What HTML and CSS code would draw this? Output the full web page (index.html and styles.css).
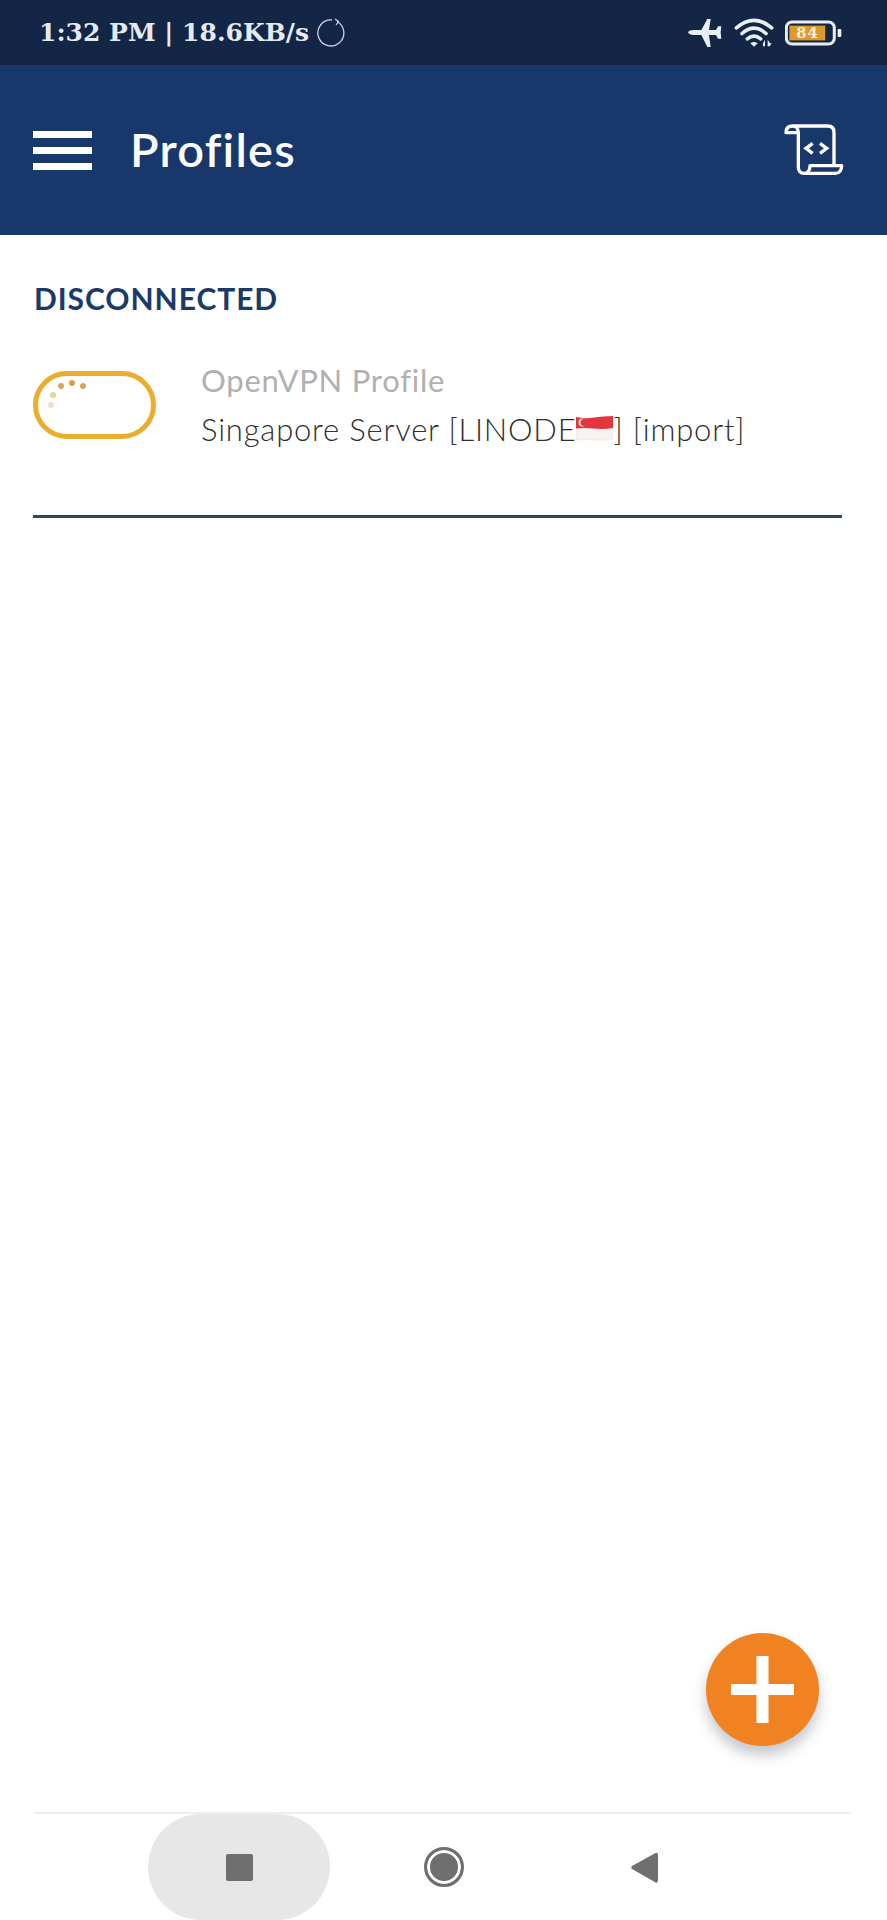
FILE: index.html
```html
<!DOCTYPE html>
<html lang="en">
<head>
<meta charset="utf-8">
<title>Profiles</title>
<link rel="stylesheet" href="styles.css">
</head>
<body>
<div class="app">
  <div class="statusbar">
    <div class="status-left">
      <span class="status-text">1:32 PM | 18.6KB/s</span>
      <svg class="spinner" viewBox="0 0 30 30"><path d="M20 3.500A13 13 0 1 1 15 2" /><path class="spinner-tip" d="M18 1l3.500 2.500-2.500 3.500"/></svg>
    </div>
    <div class="status-right">
      <svg class="ic-plane" viewBox="88 75 102 90"><path d="M88 118Q92 111 105 111L128 111 146 78H156L151 111 172 111 178 100H188L186 118 188 137H178L172 126H151L156 162H146L128 126H105Q92 126 88 118Z"/></svg>
      <svg class="ic-wifi" viewBox="225 75 120 95">
        <path class="wifi-arc" d="M232 107Q285 62 338 107"/>
        <path class="wifi-arc" d="M249 124Q285 92 321 124"/>
        <path class="wifi-arc" d="M265 140Q285 124 305 140"/>
        <path class="wifi-fill" d="M274 153Q285 146 296 153L285 164Z"/>
        <path class="wifi-fill" d="M318 143V162H312V153ZM326 143L333 153H338L332 162H326Z"/>
      </svg>
      <svg class="ic-battery" viewBox="378 82 170 76">
        <rect class="batt-shell" x="382" y="87" width="143" height="66" rx="17"/>
        <rect class="batt-level" x="391" y="98" width="107" height="44"/>
        <rect class="batt-tip" x="535" y="108" width="11" height="24" rx="3"/>
        <text class="batt-text" x="445" y="136" text-anchor="middle">84</text>
      </svg>
    </div>
  </div>

  <header class="toolbar">
    <div class="hamburger"><span></span><span></span><span></span></div>
    <h1 class="title">Profiles</h1>
    <svg class="ic-script" viewBox="372 372 180 156">
      <path d="M378 398C378 384 386 378 398 378H503C515 378 522 385 522 397V497H545C545 510 538 520 526 520H432C421 520 415 512 415 502V398C415 386 408 378 398 378M378 398H412M522 497H450C450 510 444 520 432 520"/>
      <path class="script-code" d="M458 430 438 445 458 460M480 430 500 445 480 460"/>
    </svg>
  </header>

  <main class="content">
    <h2 class="section-label">DISCONNECTED</h2>
    <div class="profile">
      <div class="toggle">
        <i class="dot dot-1"></i><i class="dot dot-2"></i><i class="dot dot-3"></i><i class="dot dot-4"></i><i class="dot dot-5"></i>
      </div>
      <div class="profile-text">
        <div class="profile-type">OpenVPN Profile</div>
        <div class="profile-name">Singapore Server [LINODE<svg class="flag" viewBox="0 0 37 26"><path class="flag-white" d="M0 12Q9 14 18 13T37 12V24Q27 26 18 25T0 25Z"/><path class="flag-red" d="M0 2Q9 4 18 2.500T37 1V13Q27 14.500 18 13.500T0 13.500Z"/><circle class="flag-moon" cx="6.500" cy="7.500" r="4"/><circle class="flag-red" cx="8" cy="7.500" r="3.400"/></svg>] [import]</div>
      </div>
    </div>
  </main>

  <button class="fab" aria-label="Add profile">
    <svg viewBox="0 0 63 67"><path d="M25.500 0h12v28h25.500v11H37.500v28h-12V39H0V28h25.500z"/></svg>
  </button>

  <nav class="navbar">
    <div class="nav-item nav-pill"><span class="nav-square"></span></div>
    <div class="nav-item"><span class="nav-home"></span></div>
    <div class="nav-item"><svg class="nav-back" viewBox="0 0 27 31"><path d="M25.500 .5 27 2V29L25.500 31 1 17Q-.5 15.500 1 14Z"/></svg></div>
  </nav>
</div>
</body>
</html>
```

FILE: styles.css
```css
* { box-sizing: border-box; }
html, body { margin: 0; padding: 0; background: #fff; }
.app {
  position: relative;
  width: 887px;
  height: 1920px;
  display: flex;
  flex-direction: column;
  overflow: hidden;
  font-family: "Lato", "Open Sans", sans-serif;
}

/* status bar */
.statusbar {
  height: 65px;
  flex: none;
  background: #142646;
  display: flex;
  align-items: center;
  justify-content: space-between;
  padding: 0 45px 0 39px;
}
.status-left { display: flex; align-items: center; gap: 8px; }
.status-text {
  font-family: "DejaVu Serif", serif;
  font-weight: 700;
  font-size: 25px;
  color: #e4e9f2;
}
.spinner { width: 30px; height: 30px; fill: none; stroke: #cdd4e0; stroke-width: 1.300; }
.spinner-tip { stroke-width: 1.200; }
.status-right { display: flex; align-items: center; }
.ic-plane { width: 34px; height: 30px; fill: #e9edf4; margin-right: 12px; }
.ic-wifi { width: 40px; height: 32px; margin-right: 11px; }
.wifi-arc { fill: none; stroke: #e9edf4; stroke-width: 11; stroke-linecap: round; }
.wifi-fill { fill: #e9edf4; }
.ic-battery { width: 57px; height: 26px; }
.batt-shell { fill: none; stroke: #e9edf4; stroke-width: 9; }
.batt-level { fill: #dd9a2c; }
.batt-tip { fill: #e9edf4; }
.batt-text { font-family: "DejaVu Serif", serif; font-weight: 700; font-size: 44px; fill: #f7efd9; letter-spacing: 3px; }

/* toolbar */
.toolbar {
  height: 170px;
  flex: none;
  background: #18376a;
  display: flex;
  align-items: center;
  padding: 0 43px 0 33px;
  color: #fff;
}
.hamburger { width: 59px; display: flex; flex-direction: column; gap: 9px; }
.hamburger span { display: block; height: 7px; background: #fff; }
.title {
  margin: 0 0 2px 38px;
  font-size: 47px;
  font-weight: 600;
  line-height: 1;
  letter-spacing: 1.200px;
  color: #fbfcfe;
}
.ic-script {
  width: 60px;
  height: 52px;
  margin-left: auto;
  fill: none;
  stroke: #fff;
  stroke-width: 10;
  stroke-linejoin: round;
  stroke-linecap: round;
}
.script-code { stroke-width: 10; stroke-linecap: butt; stroke-linejoin: miter; }

/* content */
.content { flex: 1; padding: 45px 45px 0 33px; }
.section-label {
  margin: 0 0 0 1px;
  font-size: 30px;
  line-height: 36px;
  font-weight: 700;
  letter-spacing: .95px;
  color: #1b3a68;
}
.profile {
  display: flex;
  align-items: flex-start;
  gap: 45px;
  margin-top: 55px;
  height: 147px;
  border-bottom: 3px solid #2e4759;
}
.toggle {
  position: relative;
  width: 123px;
  height: 68px;
  border: 5px solid #ebae2c;
  border-radius: 34px;
  flex: none;
}
.dot { position: absolute; border-radius: 50%; width: 6px; height: 6px; }
.dot-1 { left: 20px; top: 7px; background: #dca35a; }
.dot-2 { left: 31px; top: 4px; background: #d9a049; }
.dot-3 { left: 42px; top: 7px; background: #dba155; }
.dot-4 { left: 12px; top: 16px; background: #d9dd95; }
.dot-5 { left: 10px; top: 26px; background: #f5dcd4; }
.profile-text { margin-top: -15px; }
.profile-type {
  font-size: 31px;
  line-height: 49px;
  letter-spacing: .75px;
  color: #b0b0b0;
}
.profile-name {
  font-size: 31px;
  line-height: 48px;
  font-weight: 300;
  letter-spacing: .8px;
  color: #2f2f2f;
  white-space: nowrap;
}
.flag { width: 37px; height: 26px; vertical-align: 0; }
.flag-white { fill: #f6f3f1; stroke: #e6e0dc; stroke-width: .6; }
.flag-red { fill: #e3343f; }
.flag-moon { fill: #f6e9e9; }

/* fab */
.fab {
  position: absolute;
  left: 706px;
  top: 1633px;
  width: 113px;
  height: 113px;
  padding: 0;
  border: 0;
  border-radius: 50%;
  background: #f08222;
  box-shadow: 0 9px 14px rgba(40, 50, 70, .28);
  display: flex;
  align-items: center;
  justify-content: center;
}
.fab svg { width: 63px; height: 67px; fill: #fff; }

/* nav bar */
.navbar {
  flex: none;
  height: 108px;
  margin: 0 36px 0 34px;
  border-top: 2px solid #eeeeee;
  padding: 0 0 0 114px;
  display: grid;
  grid-template-columns: 182px 228px 174px;
  justify-content: start;
}
.nav-item { display: flex; align-items: center; justify-content: center; }
.nav-pill { background: #e7e7e7; border-radius: 76px; }
.nav-square { display: block; width: 27px; height: 27px; border-radius: 2px; background: #6f6f6f; }
.nav-home {
  display: block;
  width: 40px;
  height: 40px;
  border-radius: 50%;
  background: #6f6f6f;
  border: 3px solid #6f6f6f;
  box-shadow: inset 0 0 0 3px #fff;
}
.nav-back { width: 27px; height: 31px; margin-left: -2px; fill: #6f6f6f; }
```
